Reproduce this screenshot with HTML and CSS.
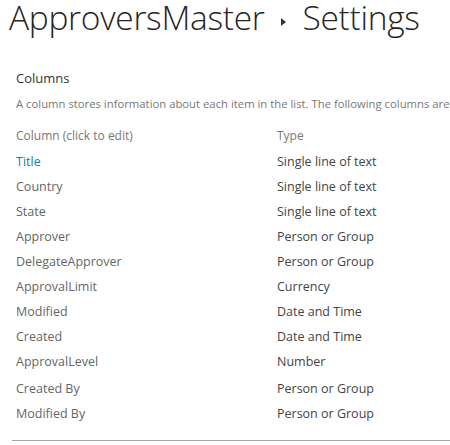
FILE: index.html
```html
<!DOCTYPE html>
<html>
<head>
<meta charset="utf-8">
<link rel="stylesheet" href="styles.css">
</head>
<body>
<div class="page">
  <h1 class="page-title">
    <span class="crumb">ApproversMaster</span>
    <span class="crumb-arrow"></span>
    <span class="crumb">Settings</span>
  </h1>
  <div class="section">
    <h2 class="section-title">Columns</h2>
    <p class="section-desc">A column stores information about each item in the list. The following columns are currently available in this list:</p>
    <div class="columns-table">
      <div class="th">Column (click to edit)</div>
      <div class="th">Type</div>
      <a class="col-name col-link">Title</a><div class="col-type">Single line of text</div>
      <a class="col-name">Country</a><div class="col-type">Single line of text</div>
      <a class="col-name">State</a><div class="col-type">Single line of text</div>
      <a class="col-name">Approver</a><div class="col-type">Person or Group</div>
      <a class="col-name">DelegateApprover</a><div class="col-type">Person or Group</div>
      <a class="col-name">ApprovalLimit</a><div class="col-type">Currency</div>
      <a class="col-name">Modified</a><div class="col-type">Date and Time</div>
      <a class="col-name">Created</a><div class="col-type">Date and Time</div>
      <a class="col-name">ApprovalLevel</a><div class="col-type">Number</div>
      <a class="col-name gap">Created By</a><div class="col-type gap">Person or Group</div>
      <a class="col-name">Modified By</a><div class="col-type">Person or Group</div>
    </div>
    <hr class="divider">
  </div>
</div>
</body>
</html>
```
FILE: styles.css
```css
html, body {
  margin: 0;
  padding: 0;
  background: #ffffff;
  overflow: hidden;
}
body {
  font-family: "Open Sans", "Noto Sans", sans-serif;
  color: #444444;
}
.page {
  width: 450px;
  overflow: hidden;
}
.page-title {
  margin: 0;
  padding: 0 0 0 9px;
  height: 34px;
  display: flex;
  align-items: flex-start;
  font-family: "Open Sans", "Noto Sans", sans-serif;
  font-weight: 300;
  font-size: 33.5px;
  line-height: 34px;
  color: #262626;
  white-space: nowrap;
  letter-spacing: -0.3px;
}
.crumb-arrow {
  flex: none;
  width: 0;
  height: 0;
  border-top: 4.5px solid transparent;
  border-bottom: 4.5px solid transparent;
  border-left: 5px solid #333333;
  margin: 18px 17px 0 16px;
}
.section {
  padding-left: 16px;
}
.section-title {
  margin: 36px 0 0 0;
  font-size: 13px;
  font-weight: 400;
  line-height: 17px;
  color: #333333;
}
.section-desc {
  margin: 9px 0 0 0;
  font-size: 11.3px;
  line-height: 16px;
  color: #777777;
  white-space: nowrap;
}
.columns-table {
  margin-top: 11px;
  display: grid;
  grid-template-columns: 261px auto;
  grid-template-rows: 26px;
  grid-auto-rows: auto;
}
.th {
  font-size: 12px;
  color: #777777;
  line-height: 25px;
}
.col-name,
.col-type {
  font-size: 12.5px;
  line-height: 25px;
  white-space: nowrap;
}
.col-name {
  color: #666666;
  text-decoration: none;
}
.col-link {
  color: #1c7d8c;
}
.col-type {
  color: #444444;
}
.gap {
  padding-top: 2px;
}
.divider {
  margin: 14px 0 0 -4px;
  border: 0;
  border-top: 1px solid #a6a6a6;
  height: 0;
}
```
